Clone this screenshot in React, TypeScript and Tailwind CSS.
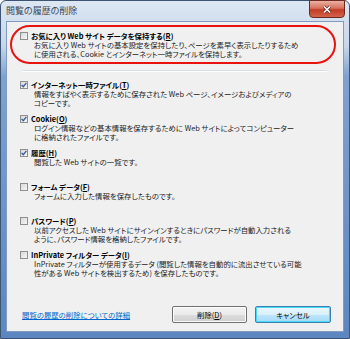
import React from "react";

type Item = {
  checked: boolean;
  title: string;
  hotkey: string;
  lines: string[];
};

const items: Item[] = [
  {
    checked: true,
    title: "インターネット一時ファイル",
    hotkey: "T",
    lines: ["情報をすばやく表示するために保存された Web ページ、イメージおよびメディアの", "コピーです。"],
  },
  {
    checked: true,
    title: "Cookie",
    hotkey: "O",
    lines: ["ログイン情報などの基本情報を保存するために Web サイトによってコンピューター", "に格納されたファイルです。"],
  },
  { checked: true, title: "履歴", hotkey: "H", lines: ["閲覧した Web サイトの一覧です。"] },
  { checked: false, title: "フォーム データ", hotkey: "F", lines: ["フォームに入力した情報を保存したものです。"] },
  {
    checked: false,
    title: "パスワード",
    hotkey: "P",
    lines: ["以前アクセスした Web サイトにサインインするときにパスワードが自動入力される", "ように、パスワード情報を格納したファイルです。"],
  },
  {
    checked: false,
    title: "InPrivate フィルター データ",
    hotkey: "I",
    lines: [
      "InPrivate フィルターが使用するデータ (閲覧した情報を自動的に流出させている可能",
      "性がある Web サイトを検出するため) を保存したものです。",
    ],
  },
];

function CheckBox({ checked }: { checked: boolean }) {
  return (
    <div className="mt-[1px] w-[8px] h-[8px] shrink-0 border border-[#8f8f8f] bg-[linear-gradient(135deg,#d8d8d8,#f7f7f7)] flex items-center justify-center">
      {checked && (
        <svg width="6" height="6" viewBox="0 0 6 6">
          <path d="M0.6 3.1 L2.3 4.8 L5.4 0.9" fill="none" stroke="#3a5ea6" strokeWidth="1.4" />
        </svg>
      )}
    </div>
  );
}

function Row({ item }: { item: Item }) {
  return (
    <div className="h-[34px]">
      <div className="flex items-start gap-[3px]">
        <CheckBox checked={item.checked} />
        <span className="font-bold text-black">
          {item.title}(<span className="underline">{item.hotkey}</span>)
        </span>
      </div>
      <div className="pl-[14px] text-[#222]">
        {item.lines.map((l, i) => (
          <div key={i}>{l}</div>
        ))}
      </div>
    </div>
  );
}

export default function App() {
  return (
    <div className="w-[350px] h-[339px] overflow-hidden bg-white">
      <div className="w-[350px] h-[339px] flex flex-col rounded-t-[6px] border border-[#3d5573] bg-[linear-gradient(180deg,#dde7f3_0px,#c7d6ea_45px,#7ea2d0_75px,#5b86c0_339px)] px-[5px] pb-[6px] [font-family:'Noto_Sans_CJK_JP','Noto_Sans',sans-serif] [font-feature-settings:'palt'] whitespace-nowrap">
        {/* title bar */}
        <div className="h-[20px] shrink-0 flex items-start justify-between">
          <div className="pt-[4px] text-[9px] leading-[11px] text-[#3b4554]">閲覧の履歴の削除</div>
          <div className="-mt-[1px] mr-[-1px] w-[36px] h-[18px] rounded-b-[4px] border border-[#6e2a20] bg-[linear-gradient(180deg,#eab1a3_0%,#d9705c_45%,#c23b24_55%,#d3644c_100%)] flex items-center justify-center">
            <svg width="10" height="9" viewBox="0 0 10 9">
              <path d="M2 1.5 L8 7.5 M8 1.5 L2 7.5" stroke="#5a2a24" strokeWidth="3" />
              <path d="M2 1.5 L8 7.5 M8 1.5 L2 7.5" stroke="#ffffff" strokeWidth="1.6" />
            </svg>
          </div>
        </div>

        {/* client area */}
        <div className="relative flex-1 flex flex-col border border-[#7f9bc1] bg-[#f0f0f0] text-[7.4px] leading-[9px] pl-[13px] pr-[12px] pt-[9px] pb-[8px]">
          {/* red annotation */}
          <div className="absolute left-[3px] top-[3px] w-[326px] h-[39px] rounded-[20px] border-2 border-[#e8130f]" />

          <div className="flex items-start gap-[3px]">
            <CheckBox checked={false} />
            <span className="font-bold text-black">
              お気に入り Web サイト データを保持する(<span className="underline">R</span>)
            </span>
          </div>
          <div className="pl-[14px] text-[#222]">
            <div>お気に入り Web サイトの基本設定を保持したり、ページを素早く表示したりするため</div>
            <div>に使用される、Cookie とインターネット一時ファイルを保持します。</div>
          </div>

          <div className="mt-[12px] ml-[2px] w-[305px] h-[2px] border-t border-[#d5dfe5] border-b border-b-white" />

          <div className="mt-[8px]">
            {items.map((it, i) => (
              <Row key={i} item={it} />
            ))}
          </div>

          <div className="mt-auto flex items-center justify-between">
            <span className="ml-[2px] -mt-[1px] text-[#0066cc] underline">閲覧の履歴の削除についての詳細</span>
            <div className="flex gap-[8px]">
              <button className="w-[75px] h-[17px] rounded-[2px] border border-[#707070] bg-[linear-gradient(180deg,#f2f2f2_0%,#ebebeb_50%,#dddddd_51%,#cfcfcf_100%)] text-[7.4px] leading-[9px] text-black shadow-[inset_0_0_0_1px_#fcfcfc]">
                削除(<span className="underline">D</span>)
              </button>
              <button className="w-[76px] h-[17px] rounded-[2px] border border-[#3c7fb1] bg-[linear-gradient(180deg,#eaf6fd_0%,#d9f0fc_50%,#bee6fd_51%,#a7d9f5_100%)] text-[7.4px] leading-[9px] text-black shadow-[inset_0_0_0_1px_#48d8fb]">
                キャンセル
              </button>
            </div>
          </div>
        </div>
      </div>
    </div>
  );
}
